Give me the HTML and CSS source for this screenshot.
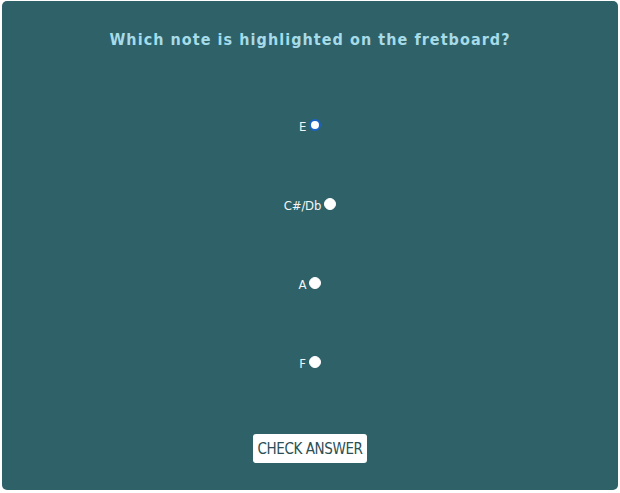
FILE: index.html
```html
<!DOCTYPE html>
<html lang="en">
<head>
<meta charset="utf-8">
<title>Quiz</title>
<link rel="stylesheet" href="styles.css">
</head>
<body>
<form class="quiz">
  <h1 class="question">Which note is highlighted on the fretboard?</h1>
  <div class="options">
    <label class="option">E<input type="radio" name="note" class="radio" checked></label>
    <label class="option">C#/Db<input type="radio" name="note" class="radio"></label>
    <label class="option">A<input type="radio" name="note" class="radio"></label>
    <label class="option">F<input type="radio" name="note" class="radio"></label>
  </div>
  <button type="button" class="check">Check Answer</button>
</form>
</body>
</html>
```
FILE: styles.css
```css
html, body {
  margin: 0;
  padding: 0;
  background: #ffffff;
}
body {
  padding: 1px 2px 3px 2px;
}
.quiz {
  box-sizing: border-box;
  height: 489px;
  background: #2f6168;
  border-radius: 5px;
  padding: 29px 0 27px;
  display: flex;
  flex-direction: column;
  align-items: center;
  font-family: "DejaVu Sans Condensed", sans-serif;
}
.question {
  margin: 0;
  height: 20px;
  line-height: 20px;
  font-family: "DejaVu Sans Condensed", sans-serif;
  font-size: 16px;
  font-weight: bold;
  letter-spacing: 1.05px;
  color: #a6dbe8;
}
.options {
  margin-top: 66px;
  display: flex;
  flex-direction: column;
  align-items: center;
  gap: 59px;
}
.option {
  height: 20px;
  display: flex;
  align-items: center;
  color: #f2f6f6;
  font-size: 13px;
  letter-spacing: -0.2px;
}
.radio {
  appearance: none;
  -webkit-appearance: none;
  box-sizing: border-box;
  width: 12px;
  height: 12px;
  margin: 0 0 3px 3px;
  border-radius: 50%;
  background: #ffffff;
  border: 1px solid #ffffff;
}
.radio:checked {
  border: 2px solid #1a64c8;
}
.check {
  margin-top: 61px;
  height: 30px;
  width: 114px;
  padding: 0;
  border: none;
  border-radius: 3px;
  background: #ffffff;
  color: #2c4f56;
  font-family: "DejaVu Sans Condensed", sans-serif;
  font-size: 15px;
  letter-spacing: -0.4px;
  white-space: nowrap;
  text-transform: uppercase;
}
```
